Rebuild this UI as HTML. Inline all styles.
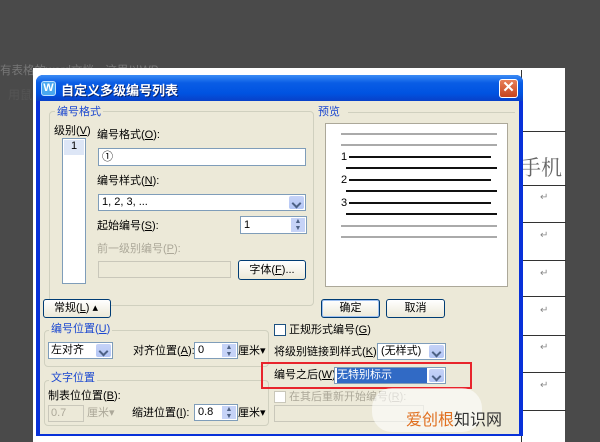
<!DOCTYPE html><html><head><meta charset="utf-8"><style>
*{margin:0;padding:0;box-sizing:border-box}
body{width:600px;height:442px;overflow:hidden;background:#4a4a4a;position:relative;font-family:"Liberation Sans","Noto Sans CJK SC",sans-serif;font-size:12px;color:#000}
.a{position:absolute}
.t{position:absolute;white-space:nowrap;font-size:11px;line-height:14px}
.grey{color:#aca899}
.inp{position:absolute;background:#fff;border:1px solid #7f9db9}
.dd{position:absolute;right:1px;top:1px;bottom:1px;width:15px;background:linear-gradient(#c6d3f7,#b3c6f5);border-radius:2px}
.dd:after{content:"";position:absolute;left:4px;top:4px;width:5px;height:5px;border-right:2px solid #4d6185;border-bottom:2px solid #4d6185;transform:rotate(45deg)}
.spin{position:absolute;right:1px;top:1px;bottom:1px;width:14px;background:#c6d3f7;font-size:7px;line-height:7px;text-align:center;color:#4d6185}
.btn{position:absolute;border:1px solid #003c74;border-radius:3px;background:linear-gradient(#fff,#ece9d8);text-align:center;font-size:11px}
.fr{position:absolute;border:1px solid #d0d0bf;border-radius:4px}
.leg{position:absolute;background:#ece9d8;padding:0 2px;font-size:11px;line-height:14px;color:#1c48d0}
.ln{position:absolute;height:2px}
.cb{position:absolute;width:12px;height:12px;border:1px solid #1c5180;background:#fff}
</style></head><body>
<div class="a" style="left:0;top:62px;color:#777;font-size:11.5px;white-space:nowrap">有表格的word文档，这里以WP</div>
<div class="a" style="left:33px;top:68px;width:532px;height:374px;background:#fff"></div>
<div class="a" style="left:8px;top:86px;color:#555;font-size:12px">用鼠</div>
<div class="a" style="left:521px;top:70px;width:44px;height:372px;border-left:1px solid #333">
<div class="a" style="left:0;top:61px;width:44px;border-top:1px solid #333"></div>
<div class="a" style="left:-2px;top:82px;font-size:21px;color:#666;font-family:'Noto Serif CJK SC',serif">手机</div>
<div class="a" style="left:0;top:115px;width:44px;border-top:1px solid #333"></div>
<div class="a" style="left:18px;top:122px;color:#888;font-size:10px">↵</div>
<div class="a" style="left:0;top:152px;width:44px;border-top:1px solid #333"></div>
<div class="a" style="left:18px;top:160px;color:#888;font-size:10px">↵</div>
<div class="a" style="left:0;top:190px;width:44px;border-top:1px solid #333"></div>
<div class="a" style="left:18px;top:198px;color:#888;font-size:10px">↵</div>
<div class="a" style="left:0;top:226px;width:44px;border-top:1px solid #333"></div>
<div class="a" style="left:18px;top:235px;color:#888;font-size:10px">↵</div>
<div class="a" style="left:0;top:265px;width:44px;border-top:1px solid #333"></div>
<div class="a" style="left:18px;top:272px;color:#888;font-size:10px">↵</div>
<div class="a" style="left:0;top:302px;width:44px;border-top:1px solid #333"></div>
<div class="a" style="left:18px;top:310px;color:#888;font-size:10px">↵</div>
<div class="a" style="left:0;top:340px;width:44px;border-top:1px solid #333"></div>
</div>
<div class="a" style="left:36px;top:75px;width:487px;height:361px;background:#0831d9;border-radius:7px 7px 0 0"></div>
<div class="a" style="left:36px;top:75px;width:487px;height:26px;background:linear-gradient(#3b8cf5,#0a5de5 30%,#0053e1 70%,#0840c8);border-radius:7px 7px 0 0"></div>
<div class="a" style="left:41px;top:81px;width:15px;height:15px;background:#4aa8f0;border:1px solid #bfe0ff;border-radius:3px;color:#fff;font-size:11px;line-height:13px;text-align:center;font-weight:bold">W</div>
<div class="a" style="left:61px;top:80px;color:#fff;font-size:13px;font-weight:bold;text-shadow:1px 1px #0a246a">自定义多级编号列表</div>
<div class="a" style="left:499px;top:79px;width:19px;height:19px;background:linear-gradient(#e8805a,#c6431c);border:1px solid #fff;border-radius:3px;color:#fff;font-size:15px;line-height:16px;text-align:center;font-weight:bold">✕</div>
<div class="a" style="left:40px;top:101px;width:479px;height:333px;background:#ece9d8"></div>

<div class="fr" style="left:49px;top:111px;width:265px;height:195px"></div>
<div class="leg" style="left:55px;top:105px">编号格式</div>
<div class="t" style="left:54px;top:124px">级别(<u>V</u>)</div>
<div class="a" style="left:62px;top:138px;width:24px;height:146px;background:#fff;border:1px solid #7f9db9"><div style="background:#dde6f6;margin:1px;height:15px;text-align:center;font-size:11px">1</div></div>
<div class="t" style="left:97px;top:128px">编号格式(<u>O</u>):</div>
<div class="inp" style="left:98px;top:148px;width:208px;height:18px;padding-left:3px;font-size:11px;line-height:16px">①</div>
<div class="t" style="left:97px;top:174px">编号样式(<u>N</u>):</div>
<div class="inp" style="left:98px;top:194px;width:208px;height:17px;padding-left:3px;font-size:11px;line-height:15px">1, 2, 3, ...<div class="dd"></div></div>
<div class="t" style="left:97px;top:219px">起始编号(<u>S</u>):</div>
<div class="inp" style="left:240px;top:216px;width:67px;height:18px;padding-left:3px;font-size:11px;line-height:16px">1<div class="spin">▲<br>▼</div></div>
<div class="t grey" style="left:97px;top:242px">前一级别编号(<u>P</u>):</div>
<div class="a" style="left:98px;top:261px;width:133px;height:17px;background:#ece9d8;border:1px solid #c9c7ba"></div>
<div class="btn" style="left:238px;top:260px;width:68px;height:20px;line-height:18px">字体(<u>F</u>)...</div>

<div class="leg" style="left:316px;top:105px">预览</div>
<div class="a" style="left:348px;top:112px;width:167px;border-top:1px solid #d0d0bf"></div>
<div class="a" style="left:325px;top:123px;width:183px;height:164px;background:#fff;border:1px solid #aca899"></div>
<div class="ln" style="left:341px;top:133px;width:156px;background:#aaa"></div>
<div class="ln" style="left:341px;top:144px;width:156px;background:#aaa"></div>
<div class="t" style="left:341px;top:150px;font-size:11px">1</div><div class="ln" style="left:349px;top:156px;width:142px;background:#111"></div>
<div class="ln" style="left:346px;top:167px;width:151px;background:#111"></div>
<div class="t" style="left:341px;top:173px;font-size:11px">2</div><div class="ln" style="left:349px;top:179px;width:142px;background:#111"></div>
<div class="ln" style="left:346px;top:190px;width:151px;background:#111"></div>
<div class="t" style="left:341px;top:196px;font-size:11px">3</div><div class="ln" style="left:349px;top:202px;width:142px;background:#111"></div>
<div class="ln" style="left:346px;top:213px;width:151px;background:#111"></div>
<div class="ln" style="left:341px;top:225px;width:156px;background:#aaa"></div>
<div class="ln" style="left:341px;top:236px;width:156px;background:#aaa"></div>

<div class="btn" style="left:43px;top:299px;width:68px;height:19px;line-height:17px;text-align:left;padding-left:10px">常规(<u>L</u>) ▴</div>
<div class="btn" style="left:321px;top:299px;width:59px;height:19px;line-height:17px;box-shadow:inset 0 0 0 1px #9ec0f0">确定</div>
<div class="btn" style="left:386px;top:299px;width:59px;height:19px;line-height:17px">取消</div>

<div class="fr" style="left:44px;top:330px;width:225px;height:37px"></div>
<div class="leg" style="left:49px;top:322px">编号位置(<u>U</u>)</div>
<div class="inp" style="left:48px;top:342px;width:65px;height:17px;padding-left:2px;font-size:11px;line-height:15px">左对齐<div class="dd"></div></div>
<div class="t" style="left:133px;top:344px">对齐位置(<u>A</u>):</div>
<div class="inp" style="left:194px;top:342px;width:44px;height:17px;padding-left:3px;font-size:11px;line-height:15px">0<div class="spin">▲<br>▼</div></div>
<div class="t" style="left:238px;top:344px">厘米▾</div>

<div class="fr" style="left:44px;top:380px;width:225px;height:46px"></div>
<div class="leg" style="left:49px;top:371px">文字位置</div>
<div class="t" style="left:48px;top:389px">制表位位置(<u>B</u>):</div>
<div class="a" style="left:48px;top:405px;width:36px;height:17px;border:1px solid #c9c7ba;color:#aca899;font-size:11px;line-height:15px;padding-left:2px">0.7</div>
<div class="t grey" style="left:87px;top:406px">厘米▾</div>
<div class="t" style="left:132px;top:406px">缩进位置(<u>I</u>):</div>
<div class="inp" style="left:194px;top:404px;width:44px;height:17px;padding-left:3px;font-size:11px;line-height:15px">0.8<div class="spin">▲<br>▼</div></div>
<div class="t" style="left:238px;top:406px">厘米▾</div>

<div class="cb" style="left:274px;top:324px"></div>
<div class="t" style="left:289px;top:323px">正规形式编号(<u>G</u>)</div>
<div class="t" style="left:274px;top:345px">将级别链接到样式(<u>K</u>):</div>
<div class="inp" style="left:377px;top:343px;width:69px;height:17px;padding-left:3px;font-size:11px;line-height:15px">(无样式)<div class="dd"></div></div>
<div class="t" style="left:274px;top:368px">编号之后(<u>W</u>):</div>
<div class="inp" style="left:334px;top:367px;width:112px;height:17px;padding-left:2px;font-size:11px;line-height:15px"><span style="background:#316ac5;color:#fff;display:inline-block;width:90px">无特别标示</span><div class="dd"></div></div>
<div class="a" style="left:261px;top:362px;width:211px;height:27px;border:2px solid #e8242c"></div>
<div class="cb" style="left:274px;top:391px;border-color:#c9c7ba"></div>
<div class="t grey" style="left:289px;top:390px">在其后重新开始编号(<u>R</u>):</div>
<div class="a" style="left:274px;top:405px;width:150px;height:17px;border:1px solid #c9c7ba"></div>
<div class="a" style="left:372px;top:388px;width:110px;height:44px;background:rgba(255,255,255,.6);border-radius:20px"></div>
<div class="a" style="left:406px;top:411px;font-size:16px;line-height:20px"><span style="color:#e07020">爱创根</span><span style="color:#333">知识网</span></div>
</body></html>
